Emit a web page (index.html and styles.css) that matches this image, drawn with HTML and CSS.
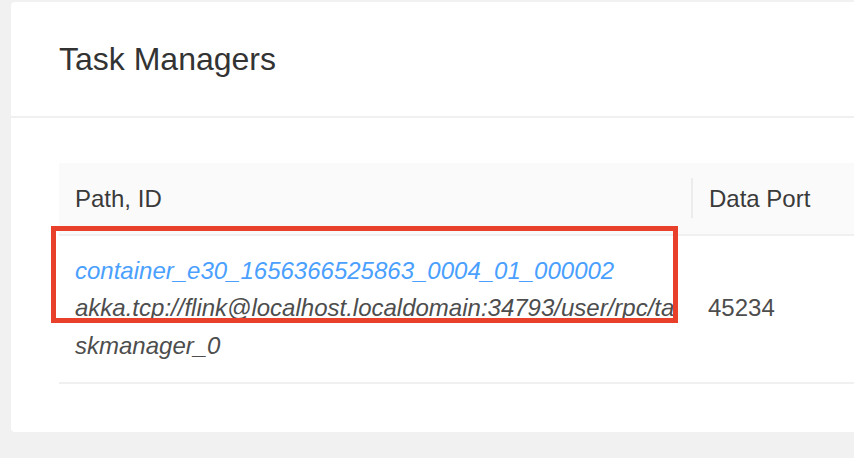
FILE: index.html
```html
<!DOCTYPE html>
<html>
<head>
<meta charset="utf-8">
<link rel="stylesheet" href="styles.css">
</head>
<body>
<div class="page">
  <div class="card">
    <div class="card-head">
      <div class="card-title">Task Managers</div>
    </div>
    <div class="card-body">
      <table class="table">
        <colgroup>
          <col class="col-path">
          <col class="col-port">
        </colgroup>
        <thead>
          <tr>
            <th>Path, ID</th>
            <th class="th-divided">Data Port</th>
          </tr>
        </thead>
        <tbody>
          <tr>
            <td class="cell-path">
              <a class="link">container_e30_1656366525863_0004_01_000002</a>
              <div class="path">akka.tcp://flink@localhost.localdomain:34793/user/rpc/taskmanager_0</div>
            </td>
            <td class="cell-port">45234</td>
          </tr>
        </tbody>
      </table>
    </div>
  </div>
  <div class="highlight"></div>
</div>
</body>
</html>
```
FILE: styles.css
```css
html, body {
  margin: 0;
  padding: 0;
}
body {
  background: #f1f1f1;
  font-family: "Liberation Sans", Arial, sans-serif;
}
.page {
  position: relative;
  width: 854px;
  height: 458px;
  box-sizing: border-box;
  padding: 2px 0 0 11px;
  overflow: hidden;
}
.card {
  background: #ffffff;
  border-radius: 4px 0 0 4px;
}
.card-head {
  padding: 0 0 0 48px;
  border-bottom: 2px solid #f0f0f0;
}
.card-title {
  padding: 32px 0;
  font-size: 32px;
  line-height: 50px;
  color: #333333;
}
.card-body {
  padding: 45px 0 48px 48px;
}
.table {
  border-collapse: collapse;
  table-layout: fixed;
  width: 100%;
  font-size: 24px;
  line-height: 37.7px;
}
.col-path {
  width: 634px;
}
.table th {
  background: #fafafa;
  text-align: left;
  font-weight: normal;
  color: #3a3a3a;
  padding: 17px 16px 16px;
  border-bottom: 2px solid #f0f0f0;
}
.th-divided {
  position: relative;
}
.th-divided::before {
  content: "";
  position: absolute;
  left: -2px;
  top: 50%;
  width: 2px;
  height: 40px;
  margin-top: -20px;
  background: #ececec;
}
.table td {
  padding: 16px 16px 17px;
  border-bottom: 2px solid #f0f0f0;
  color: #4d4d4d;
}
.table td.cell-port {
  vertical-align: middle;
  padding-left: 15px;
}
.cell-path {
  font-style: italic;
  word-break: break-all;
}
.link {
  display: block;
  color: #4a9fff;
}
.highlight {
  position: absolute;
  left: 51px;
  top: 226px;
  width: 627px;
  height: 97px;
  box-sizing: border-box;
  border: 5px solid #e8402a;
}
```
